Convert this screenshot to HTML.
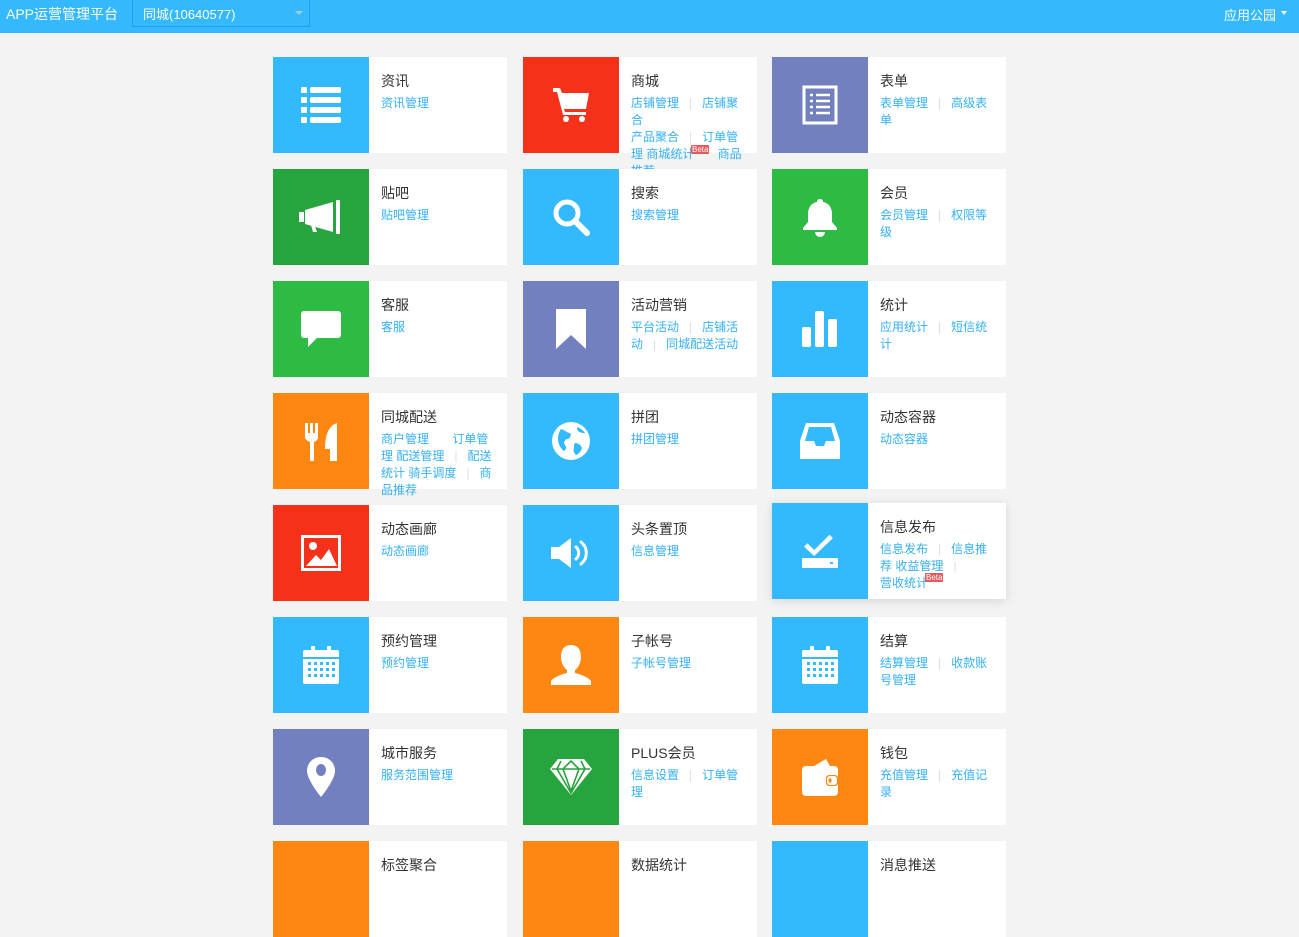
<!DOCTYPE html>
<html><head><meta charset="utf-8"><style>
*{margin:0;padding:0;box-sizing:border-box}
body{width:1299px;height:872px;overflow:hidden;background:#f3f3f3;font-family:"Liberation Sans","Noto Sans CJK SC",sans-serif;position:relative}
.hd{position:absolute;left:0;top:0;width:1299px;height:33px;background:#34b9fe;color:#fff}
.hd .t{position:absolute;left:6px;top:4px;font-size:14px}
.hd .sel{position:absolute;left:132px;top:0;width:178px;height:27px;border:1px solid #1c9fe6;border-top:none;font-size:13px;padding:4px 0 0 10px}
.hd .sel:after{content:"";position:absolute;right:6px;top:11px;border:4px solid transparent;border-top:4px solid #9fcfe9}
.hd .r{position:absolute;right:12px;top:5px;font-size:13px}
.hd .r:after{content:"";display:inline-block;margin-left:5px;vertical-align:2px;border:3px solid transparent;border-top:4px solid #fff}
.c{position:absolute;width:234px;height:96px;background:#fff}
.c .ic{position:absolute;left:0;top:0;width:96px;height:96px;display:flex;align-items:center;justify-content:center}
.c .tt{position:absolute;left:108px;top:14px;font-size:14px;color:#333;white-space:nowrap}
.c .ln{position:absolute;left:108px;top:38px;font-size:12px;line-height:17px;color:#34b0f4;white-space:nowrap}
.s{color:#ddd;margin:0 10px}
.beta{position:absolute;background:#e8575a;color:#fff;font-size:8px;line-height:9px;padding:0 1px;border-radius:1px}
.B{background:#33b9fe}.R{background:#f53119}.P{background:#7280bf}.G{background:#26a43d}.g{background:#2dbb44}.O{background:#fe8712}
.sh{box-shadow:0 2px 10px rgba(0,0,0,.12)}
</style></head><body>
<div class="hd"><div class="t">APP运营管理平台</div><div class="sel">同城(10640577)</div><div class="r">应用公园</div></div>

<div class="c" style="left:273px;top:57px"><div class="ic B"><svg width="40" height="36" viewBox="0 0 40 36" fill="#fff"><rect x="0" y="0" width="6" height="6" rx="1"/><rect x="9" y="0" width="31" height="6" rx="2"/><rect x="0" y="10" width="6" height="6" rx="1"/><rect x="9" y="10" width="31" height="6" rx="2"/><rect x="0" y="20" width="6" height="6" rx="1"/><rect x="9" y="20" width="31" height="6" rx="2"/><rect x="0" y="30" width="6" height="6" rx="1"/><rect x="9" y="30" width="31" height="6" rx="2"/></svg></div><div class="tt">资讯</div><div class="ln">资讯管理</div></div>
<div class="c" style="left:523px;top:57px"><div class="ic R"><svg width="40" height="40" viewBox="0 0 40 40" fill="#fff"><path d="M2 3h7l2 5h27l-3 16H13l1 3h21v3H12L6 7H2z"/><circle cx="15" cy="34" r="3"/><circle cx="31" cy="34" r="3"/></svg></div><div class="tt">商城</div><div class="ln">店铺管理<span class="s">|</span>店铺聚<br>合<br>产品聚合<span class="s">|</span>订单管<br>理 商城统计 &nbsp; &nbsp; &nbsp; 商品<br>推荐</div><span class="beta" style="left:168px;top:88px">Beta</span></div>
<div class="c" style="left:772px;top:57px"><div class="ic P"><svg width="36" height="40" viewBox="0 0 36 40" fill="none" stroke="#fff" stroke-width="3"><rect x="2" y="2" width="32" height="36"/><g stroke-width="2.5"><path d="M8 10h3M14 10h14M8 16h3M14 16h14M8 22h3M14 22h14M8 28h3M14 28h14"/></g></svg></div><div class="tt">表单</div><div class="ln">表单管理<span class="s">|</span>高级表<br>单</div></div>

<div class="c" style="left:273px;top:169px"><div class="ic G"><svg width="44" height="34" viewBox="0 0 44 34" fill="#fff"><rect x="0" y="12" width="5" height="10"/><path d="M6 10l28-8v30L6 24z"/><rect x="37" y="0" width="4" height="34" rx="1"/><path d="M12 25l4 1 2 6h-4z"/></svg></div><div class="tt">贴吧</div><div class="ln">贴吧管理</div></div>
<div class="c" style="left:523px;top:169px"><div class="ic B"><svg width="40" height="40" viewBox="0 0 40 40"><circle cx="16" cy="16" r="11" fill="none" stroke="#fff" stroke-width="5"/><path d="M24 24l12 12" stroke="#fff" stroke-width="6" stroke-linecap="round"/></svg></div><div class="tt">搜索</div><div class="ln">搜索管理</div></div>
<div class="c" style="left:772px;top:169px"><div class="ic g"><svg width="36" height="40" viewBox="0 0 36 40" fill="#fff"><path d="M18 2c2 0 3 1 3 3 6 1 9 6 9 12v8l5 6v2H1v-2l5-6v-8c0-6 3-11 9-12 0-2 1-3 3-3z"/><path d="M13 35h10a5 5 0 0 1-10 0z"/></svg></div><div class="tt">会员</div><div class="ln">会员管理<span class="s">|</span>权限等<br>级</div></div>

<div class="c" style="left:273px;top:281px"><div class="ic g"><svg width="40" height="36" viewBox="0 0 40 36" fill="#fff"><rect x="0" y="0" width="40" height="27" rx="3"/><path d="M7 26h10l-10 10z"/></svg></div><div class="tt">客服</div><div class="ln">客服</div></div>
<div class="c" style="left:523px;top:281px"><div class="ic P"><svg width="30" height="40" viewBox="0 0 30 40" fill="#fff"><path d="M0 0h30v40L15 26 0 40z"/></svg></div><div class="tt">活动营销</div><div class="ln">平台活动<span class="s">|</span>店铺活<br>动<span class="s">|</span>同城配送活动</div></div>
<div class="c" style="left:772px;top:281px"><div class="ic B"><svg width="36" height="36" viewBox="0 0 36 36" fill="#fff"><rect x="0" y="16" width="9" height="20" rx="2"/><rect x="13" y="0" width="9" height="36" rx="2"/><rect x="26" y="8" width="9" height="28" rx="2"/></svg></div><div class="tt">统计</div><div class="ln">应用统计<span class="s">|</span>短信统<br>计</div></div>

<div class="c" style="left:273px;top:393px"><div class="ic O"><svg width="36" height="40" viewBox="0 0 36 40" fill="#fff"><path d="M2 2h3v10h2V2h3v10h2V2h3v14c0 3-2 4-4 5v19H7V21c-2-1-5-2-5-5z"/><path d="M34 2v38h-7V28h-5c0-16 5-24 12-26z"/></svg></div><div class="tt">同城配送</div><div class="ln">商户管理 &nbsp; &nbsp; &nbsp; 订单管<br>理 配送管理<span class="s">|</span>配送<br>统计 骑手调度<span class="s">|</span>商<br>品推荐</div></div>
<div class="c" style="left:523px;top:393px"><div class="ic B"><svg width="40" height="40" viewBox="0 0 40 40"><circle cx="20" cy="20" r="19" fill="#fff"/><path d="M10 8c4 1 6 4 9 4 2 2 0 5-2 6-3 0-5 3-3 6 2 2 1 5-1 6-3-2-6-7-6-12 0-4 1-7 3-10zM24 22c3 0 6 2 7 5-1 3-3 6-6 7-2-2-3-4-2-7 0-2 0-4 1-5zM26 6c3 1 6 3 8 6-2 0-4 0-5-1-2 0-3-2-3-5z" fill="#33b9fe"/></svg></div><div class="tt">拼团</div><div class="ln">拼团管理</div></div>
<div class="c" style="left:772px;top:393px"><div class="ic B"><svg width="40" height="36" viewBox="0 0 40 36" fill="#fff"><path d="M6 0h28l6 18v18H0V18zM9 4L5 18h9l2 5h8l2-5h9L31 4z"/></svg></div><div class="tt">动态容器</div><div class="ln">动态容器</div></div>

<div class="c" style="left:273px;top:505px"><div class="ic R"><svg width="40" height="36" viewBox="0 0 40 36"><rect x="1.5" y="1.5" width="37" height="33" fill="none" stroke="#fff" stroke-width="3"/><circle cx="12" cy="11" r="4" fill="#fff"/><path d="M5 31l10-11 5 5 8-11 8 17z" fill="#fff"/></svg></div><div class="tt">动态画廊</div><div class="ln">动态画廊</div></div>
<div class="c" style="left:523px;top:505px"><div class="ic B"><svg width="40" height="32" viewBox="0 0 40 32"><path d="M0 10h8l12-9v30L8 22H0z" fill="#fff"/><path d="M25 10a8 8 0 0 1 0 12M30 5a14 14 0 0 1 0 22" fill="none" stroke="#fff" stroke-width="3" stroke-linecap="round"/></svg></div><div class="tt">头条置顶</div><div class="ln">信息管理</div></div>
<div class="c sh" style="left:772px;top:503px"><div class="ic B"><svg width="36" height="36" viewBox="0 0 36 36"><path d="M4 12l8 8L30 2l4 4-22 21-12-11z" fill="#fff" transform="translate(2,0) scale(.85)"/><rect x="0" y="25" width="36" height="10" rx="1" fill="#fff"/><rect x="28" y="29" width="3" height="2" fill="#33b9fe"/></svg></div><div class="tt">信息发布</div><div class="ln">信息发布<span class="s">|</span>信息推<br>荐 收益管理<span class="s">|</span><br>营收统计</div><span class="beta" style="left:153px;top:70px">Beta</span></div>

<div class="c" style="left:273px;top:617px"><div class="ic B"><svg width="36" height="38" viewBox="0 0 36 38" fill="#fff"><rect x="0" y="4" width="36" height="34" rx="2"/><rect x="8" y="0" width="4" height="8" rx="1"/><rect x="24" y="0" width="4" height="8" rx="1"/><g fill="#33b9fe"><rect x="0" y="11" width="36" height="2"/><rect x="5" y="16" width="3" height="3"/><rect x="11" y="16" width="3" height="3"/><rect x="17" y="16" width="3" height="3"/><rect x="23" y="16" width="3" height="3"/><rect x="29" y="16" width="3" height="3"/><rect x="5" y="22" width="3" height="3"/><rect x="11" y="22" width="3" height="3"/><rect x="17" y="22" width="3" height="3"/><rect x="23" y="22" width="3" height="3"/><rect x="29" y="22" width="3" height="3"/><rect x="5" y="28" width="3" height="3"/><rect x="11" y="28" width="3" height="3"/><rect x="17" y="28" width="3" height="3"/><rect x="23" y="28" width="3" height="3"/><rect x="29" y="28" width="3" height="3"/></g></svg></div><div class="tt">预约管理</div><div class="ln">预约管理</div></div>
<div class="c" style="left:523px;top:617px"><div class="ic O"><svg width="40" height="40" viewBox="0 0 40 40" fill="#fff"><path d="M20 0c7 0 10 5 10 12 0 6-3 11-6 13v3c8 2 14 5 16 8v4H0v-4c2-3 8-6 16-8v-3c-3-2-6-7-6-13 0-7 3-12 10-12z"/></svg></div><div class="tt">子帐号</div><div class="ln">子帐号管理</div></div>
<div class="c" style="left:772px;top:617px"><div class="ic B"><svg width="36" height="38" viewBox="0 0 36 38" fill="#fff"><rect x="0" y="4" width="36" height="34" rx="2"/><rect x="8" y="0" width="4" height="8" rx="1"/><rect x="24" y="0" width="4" height="8" rx="1"/><g fill="#33b9fe"><rect x="0" y="11" width="36" height="2"/><rect x="5" y="16" width="3" height="3"/><rect x="11" y="16" width="3" height="3"/><rect x="17" y="16" width="3" height="3"/><rect x="23" y="16" width="3" height="3"/><rect x="29" y="16" width="3" height="3"/><rect x="5" y="22" width="3" height="3"/><rect x="11" y="22" width="3" height="3"/><rect x="17" y="22" width="3" height="3"/><rect x="23" y="22" width="3" height="3"/><rect x="29" y="22" width="3" height="3"/><rect x="5" y="28" width="3" height="3"/><rect x="11" y="28" width="3" height="3"/><rect x="17" y="28" width="3" height="3"/><rect x="23" y="28" width="3" height="3"/><rect x="29" y="28" width="3" height="3"/></g></svg></div><div class="tt">结算</div><div class="ln">结算管理<span class="s">|</span>收款账<br>号管理</div></div>

<div class="c" style="left:273px;top:729px"><div class="ic P"><svg width="28" height="40" viewBox="0 0 28 40"><path d="M14 0C6 0 0 6 0 14c0 9 14 26 14 26s14-17 14-26C28 6 22 0 14 0z" fill="#fff"/><ellipse cx="14" cy="13" rx="5" ry="6" fill="#7280bf"/></svg></div><div class="tt">城市服务</div><div class="ln">服务范围管理</div></div>
<div class="c" style="left:523px;top:729px"><div class="ic G"><svg width="44" height="38" viewBox="0 0 44 38"><path d="M9 1h26l8 10-21 26L1 11z" fill="#fff"/><path d="M3 11h38M12 3l-4 8 14 24 14-24-4-8M14 11l8-8 8 8-8 22z" fill="none" stroke="#26a43d" stroke-width="1.6"/></svg></div><div class="tt">PLUS会员</div><div class="ln">信息设置<span class="s">|</span>订单管<br>理</div></div>
<div class="c" style="left:772px;top:729px"><div class="ic O"><svg width="36" height="38" viewBox="0 0 36 38"><path d="M12 8l12-7 4 7z" fill="#fff"/><rect x="0" y="8" width="36" height="30" rx="4" fill="#fff"/><rect x="24" y="17" width="12" height="11" rx="3" fill="#fe8712"/><rect x="25" y="18" width="10" height="9" rx="3" fill="#fff"/><ellipse cx="28" cy="22.5" rx="1.6" ry="2.2" fill="#fe8712"/></svg></div><div class="tt">钱包</div><div class="ln">充值管理<span class="s">|</span>充值记<br>录</div></div>

<div class="c" style="left:273px;top:841px"><div class="ic O"></div><div class="tt">标签聚合</div></div>
<div class="c" style="left:523px;top:841px"><div class="ic O"></div><div class="tt">数据统计</div></div>
<div class="c" style="left:772px;top:841px"><div class="ic B"></div><div class="tt">消息推送</div></div>
</body></html>
